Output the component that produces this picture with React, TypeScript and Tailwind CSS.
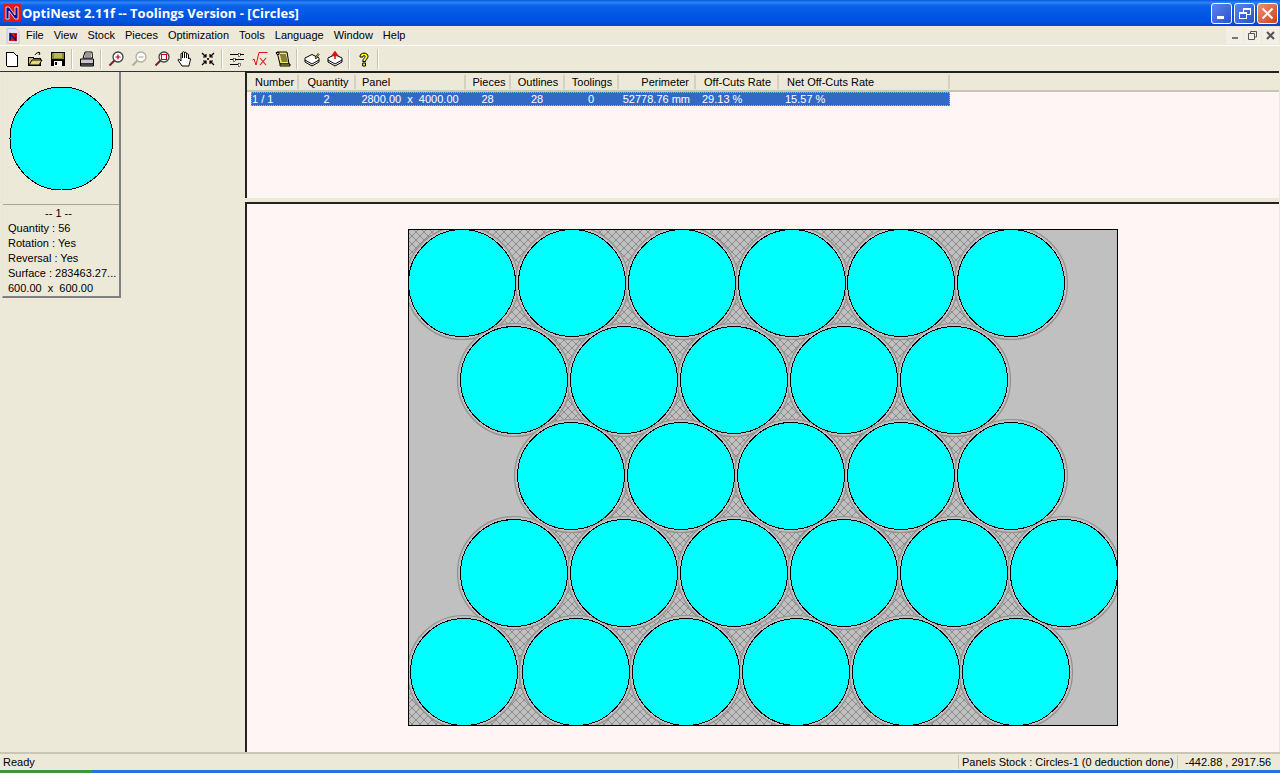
const rows = [
  { cy: 283, xs: [462, 572, 682, 792, 901, 1011] },
  { cy: 380, xs: [514, 624, 734, 844, 954] },
  { cy: 476, xs: [571, 681, 791, 901, 1011] },
  { cy: 573, xs: [514, 624, 734, 844, 954, 1064] },
  { cy: 672, xs: [464, 576, 686, 796, 906, 1016] },
]

const menus = ["File", "View", "Stock", "Pieces", "Optimization", "Tools", "Language", "Window", "Help"]

const columns = [
  { label: "Number", value: "1 / 1", w: "w-[48px]", head: "pl-[4px] text-left", cell: "-mr-[2px] text-left" },
  { label: "Quantity", value: "2", w: "w-[57px]", head: "pl-[3px] text-center", cell: "text-center" },
  { label: "Panel", value: "2800.00  x  4000.00", w: "w-[110px]", head: "pl-[6px] text-left", cell: "text-center" },
  { label: "Pieces", value: "28", w: "w-[45px]", head: "pl-[3px] text-center", cell: "text-center" },
  { label: "Outlines", value: "28", w: "w-[54px]", head: "pl-[2px] text-center", cell: "text-center" },
  { label: "Toolings", value: "0", w: "w-[54px]", head: "pl-[2px] text-center", cell: "text-center" },
  { label: "Perimeter", value: "52778.76 mm", w: "w-[77px]", head: "pr-[5px] text-right", cell: "pr-[5px] text-right" },
  { label: "Off-Cuts Rate", value: "29.13 %", w: "w-[83px]", head: "pl-[8px] text-left", cell: "pl-[7px] text-left" },
  { label: "Net Off-Cuts Rate", value: "15.57 %", w: "w-[171px]", head: "pl-[8px] text-left", cell: "pl-[7px] text-left" },
]

function Icon({ children }: { children: React.ReactNode }) {
  return (
    <svg width="16" height="16" viewBox="0 0 16 16" className="shrink-0" shapeRendering="crispEdges">
      {children}
    </svg>
  )
}

function ToolbarSep() {
  return <div className="mx-[2px] h-[20px] w-[2px] border-l border-r border-l-[#c5c2b2] border-r-white" />
}

function ToolButton({ children }: { children: React.ReactNode }) {
  return <div className="flex h-[22px] w-[23px] items-center justify-center">{children}</div>
}

function Magnifier({ stroke, handle, children }: { stroke: string; handle: string; children?: React.ReactNode }) {
  return (
    <Icon>
      <g shapeRendering="auto">
        <circle cx="10" cy="6" r="5" fill="#fff" stroke={stroke} strokeWidth="1.3" />
        <path d="M6.5 9.5L1.5 14.5" stroke={handle} strokeWidth="2" />
        {children}
      </g>
    </Icon>
  )
}

function Stack({ top }: { top: React.ReactNode }) {
  return (
    <Icon>
      <g shapeRendering="auto">
        <path d="M1 7L8 3.5L15 7L8 11Z" fill="#fff" stroke="#000" />
        <path d="M1 7V9L8 13L15 9V7M1 9V11L8 15L15 11V9" fill="#fff" stroke="#000" />
        {top}
      </g>
    </Icon>
  )
}

function Toolbar() {
  return (
    <div className="flex h-[25px] items-center bg-[#ece9d8]">
      <ToolButton>
        <Icon>
          <path d="M3 1H10V2H11V3H12V4H13V15H3Z" fill="#fff" />
          <path d="M3 1H10V2H3ZM2 1H3V15H2ZM3 15H14V16H3ZM13 4H14V15H13ZM10 2H11V3H10ZM11 3H12V4H11ZM12 4H13V5H12Z" fill="#000" />
        </Icon>
      </ToolButton>
      <ToolButton>
        <Icon>
          <path d="M1 6H6V7H13V14H1Z" fill="#d6c24a" stroke="#000" />
          <path d="M2 14L5 9H15L12 14Z" fill="#e8d872" stroke="#000" strokeWidth="1" shapeRendering="auto" />
          <path d="M8 4C9 2 11 1 13 2M13 2L11 1M13 2L12 4" fill="none" stroke="#000" shapeRendering="auto" />
        </Icon>
      </ToolButton>
      <ToolButton>
        <Icon>
          <path d="M1 1H15V15H1Z" fill="#000" />
          <path d="M2 2H14V8H2Z" fill="#8a8a20" />
          <path d="M4 2H12V7H4Z" fill="#b8b860" />
          <path d="M4 10H12V15H4Z" fill="#fff" />
          <path d="M5 11H7V14H5Z" fill="#000" />
        </Icon>
      </ToolButton>
      <ToolbarSep />
      <ToolButton>
        <Icon>
          <g shapeRendering="auto">
            <path d="M4 7L6 1H13L13.5 7Z" fill="#fff" stroke="#000" />
            <path d="M1.5 8H14.5V13H1.5Z" fill="#c8c8c8" stroke="#000" />
            <path d="M1.5 13H14.5V15H1.5Z" fill="#808080" stroke="#000" />
            <path d="M10 10H13V11H10Z" fill="#e8d040" />
            <path d="M6 3H12M5.5 5H12" stroke="#000" strokeWidth="0.8" />
          </g>
        </Icon>
      </ToolButton>
      <ToolbarSep />
      <ToolButton>
        <Magnifier stroke="#404040" handle="#7a2030">
          <path d="M7.5 6H12.5M10 3.5V8.5" stroke="#c00020" strokeWidth="1.2" />
        </Magnifier>
      </ToolButton>
      <ToolButton>
        <Magnifier stroke="#b0ae9e" handle="#b0ae9e">
          <path d="M7.5 6H12.5" stroke="#b0ae9e" strokeWidth="1.2" />
        </Magnifier>
      </ToolButton>
      <ToolButton>
        <Magnifier stroke="#404040" handle="#7a2030">
          <path d="M7.5 3.5H12.5V8.5H7.5Z" fill="none" stroke="#c00020" strokeWidth="1.1" />
        </Magnifier>
      </ToolButton>
      <ToolButton>
        <Icon>
          <path
            d="M5 15C4 13 2 11 1 9C1 8 2 8 3 9L4 10V3C4 2 5.500 2 5.500 3V7V1.500C5.500 0.500 7.500 0.500 7.500 1.500V7V2C7.500 1 9.500 1 9.500 2V7V3.500C9.500 2.500 11.500 2.500 11.500 3.500V8C12 7 13.500 7 13.500 8C13.500 10 12 13 12 15Z"
            fill="#fff"
            stroke="#000"
            strokeWidth="1"
            shapeRendering="auto"
          />
        </Icon>
      </ToolButton>
      <ToolButton>
        <Icon>
          <g shapeRendering="auto" stroke="#000" strokeWidth="1.2" fill="none">
            <path d="M2 2L6 6M6 3V6H3" />
            <path d="M14 2L10 6M10 3V6H13" />
            <path d="M2 14L6 10M6 13V10H3" />
            <path d="M14 14L10 10M10 13V10H13" />
          </g>
          <path d="M7 7H9V9H7Z" fill="#a00000" />
        </Icon>
      </ToolButton>
      <ToolbarSep />
      <ToolButton>
        <Icon>
          <path d="M1 3H15V4H1ZM1 8H15V9H1ZM1 13H9V14H1Z" fill="#000" />
          <path d="M9 2H11V5H9ZM4 7H6V10H4ZM9 12H11V15H9Z" fill="#fff" stroke="#000" strokeWidth="0.5" />
        </Icon>
      </ToolButton>
      <ToolButton>
        <svg width="16" height="16" viewBox="0 0 16 16" className="shrink-0">
          <path d="M0.500 9L2 8L4 14L7 1.500H15.500" fill="none" stroke="#e01010" strokeWidth="1" />
          <path d="M8 7L14 14M14 7L8 14" fill="none" stroke="#e01010" strokeWidth="1.1" />
        </svg>
      </ToolButton>
      <ToolButton>
        <Icon>
          <g shapeRendering="auto">
            <path d="M2 1H12L14 13H5Z" fill="#f0e870" stroke="#000" />
            <path d="M1 1.500H4V3.500H2ZM5 13V15H15V13Z" fill="#c8c040" stroke="#000" />
            <path d="M5 4H11M5.500 6H11.500M6 8H12M6.500 10H12.500" stroke="#000" strokeWidth="0.9" />
          </g>
        </Icon>
      </ToolButton>
      <ToolbarSep />
      <ToolButton>
        <Stack top={<path d="M11 7L14 2.500L15 3.500L12 8Z" fill="#e8d040" stroke="#000" strokeWidth="0.7" />} />
      </ToolButton>
      <ToolButton>
        <Stack top={<path d="M8 8V3.500M5.500 4.500L8 1L10.500 4.500Z" fill="#e01010" stroke="#e01010" strokeWidth="1.600" />} />
      </ToolButton>
      <ToolbarSep />
      <ToolButton>
        <Icon>
          <g shapeRendering="auto">
            <path
              d="M4 5.500C4 1 12 1 12 5.500C12 8 9.500 8 9.500 10.500H6.700C6.700 7.500 9 7.500 9 5.500C9 4 7 4 7 6H4Z"
              fill="#ffff20"
              stroke="#000"
            />
            <path d="M6.700 12H9.500V15H6.700Z" fill="#ffff20" stroke="#000" />
          </g>
        </Icon>
      </ToolButton>
      <ToolbarSep />
    </div>
  )
}

function PanelDrawing() {
  return (
    <svg width="1280" height="773" viewBox="0 0 1280 773" className="block">
      <defs>
        <pattern id="hatch" width="8" height="8" patternUnits="userSpaceOnUse">
          <rect width="8" height="8" fill="#c0c0c0" />
          <path d="M-1 1L1 -1M-1 9L9 -1M7 9L9 7M-1 -1L9 9" stroke="#8c8c8c" strokeWidth="1" fill="none" />
        </pattern>
        <clipPath id="sheet">
          <rect x="409" y="230" width="708" height="495" />
        </clipPath>
      </defs>
      <rect x="408.500" y="229.500" width="709" height="496" fill="#c0c0c0" stroke="#000" />
      <g clipPath="url(#sheet)">
        <path
          d="M408 230H1000L1011 283L954 380L1011 476L1064 573L1016 672V726H408V672L464 672L514 573L571 476L514 380L462 283L408 283Z"
          fill="url(#hatch)"
        />
        {rows.map((row) =>
          row.xs.map((cx) => (
            <circle key={`o${row.cy}-${cx}`} cx={cx} cy={row.cy} r="56.500" fill="#c0c0c0" stroke="#909090" strokeWidth="1.200" />
          )),
        )}
        {rows.map((row) =>
          row.xs.map((cx) => (
            <circle
              key={`c${row.cy}-${cx}`}
              cx={cx}
              cy={row.cy}
              r="53.500"
              fill="#00ffff"
              stroke="#000"
              strokeWidth="1"
              shapeRendering="crispEdges"
            />
          )),
        )}
      </g>
    </svg>
  )
}

export default function App() {
  return (
    <div className="flex h-[773px] w-[1280px] flex-col overflow-hidden bg-[#ece9d8] font-['Liberation_Sans',sans-serif] text-[11px] leading-none text-black">
      {/* Title bar */}
      <div className="flex h-[26px] shrink-0 items-center bg-[linear-gradient(180deg,#0a5be0_0%,#2a86f4_10%,#0a62ea_22%,#0055e5_60%,#0050dc_85%,#0046c0_100%)] pl-[3px] pr-[2px]">
        <svg width="18" height="18" viewBox="0 0 18 18" className="shrink-0">
          <rect width="18" height="18" fill="#e01818" />
          <path d="M3 15V3H6L12 11V3H15V15H12L6 7V15Z" fill="#0c0c90" stroke="#fff" strokeWidth="0.8" />
        </svg>
        <span className="ml-[1px] font-['Open_Sans',sans-serif] text-[13px] font-bold text-white">
          OptiNest 2.11f -- Toolings Version - [Circles]
        </span>
        <div className="ml-auto flex items-center gap-[2px]">
          <div className="relative h-[21px] w-[21px] rounded-[3px] border border-white bg-[linear-gradient(135deg,#5a86ee,#2a50d0)]">
            <div className="absolute bottom-[4px] left-[5px] h-[3px] w-[7px] bg-white" />
          </div>
          <div className="relative h-[21px] w-[21px] rounded-[3px] border border-white bg-[linear-gradient(135deg,#5a86ee,#2a50d0)]">
            <div className="absolute left-[8px] top-[4px] h-[7px] w-[8px] border border-t-2 border-white" />
            <div className="absolute left-[4px] top-[8px] h-[7px] w-[8px] border border-t-2 border-white bg-[#3c62dc]" />
          </div>
          <div className="flex h-[21px] w-[21px] items-center justify-center rounded-[3px] border border-white bg-[linear-gradient(135deg,#f09070,#d04018)]">
            <svg width="13" height="13" viewBox="0 0 13 13">
              <path d="M1.500 1.500L11.500 11.500M11.500 1.500L1.500 11.500" stroke="#fff" strokeWidth="2" />
            </svg>
          </div>
        </div>
      </div>

      {/* Menu bar */}
      <div className="flex h-[20px] shrink-0 items-center border-b border-white pl-[6px]">
        <svg width="14" height="16" viewBox="0 0 14 16" className="shrink-0">
          <path d="M1 0.500H10L13 3.500V15.500H1Z" fill="#dfe6fb" stroke="#b8c4ea" />
          <rect x="3" y="5" width="8" height="8" fill="#d81010" />
          <path d="M4.500 12V6L9.500 12V6" fill="none" stroke="#101080" strokeWidth="1.300" />
        </svg>
        <div className="ml-[6px] flex gap-[10px]">
          {menus.map((m) => (
            <span key={m}>{m}</span>
          ))}
        </div>
        <div className="ml-auto flex items-center gap-[1px] pr-[1px]">
          {["min", "restore", "close"].map((k) => (
            <div key={k} className="flex h-[17px] w-[17px] items-center justify-center bg-[#f1efe6]">
              {k === "min" && <div className="mt-[4px] h-[2px] w-[6px] bg-[#777]" />}
              {k === "restore" && (
                <svg width="9" height="9" viewBox="0 0 9 9">
                  <path d="M2.500 2V0.500H8.500V6H7M0.500 2.500H6.500V8.500H0.500Z" fill="none" stroke="#555" />
                </svg>
              )}
              {k === "close" && (
                <svg width="9" height="9" viewBox="0 0 9 9">
                  <path d="M1 1L8 8M8 1L1 8" stroke="#555" strokeWidth="2" />
                </svg>
              )}
            </div>
          ))}
        </div>
      </div>

      <Toolbar />

      {/* Workspace */}
      <div className="flex min-h-0 flex-1">
        {/* Pieces panel */}
        <div className="w-[245px] shrink-0 border-t border-t-[#333] pl-[2px]">
          <div className="flex h-[226px] w-[119px] flex-col border-b-2 border-r-2 border-[#808080] border-l-[1px] border-l-[#e8e6da]">
            <div className="flex h-[132px] items-start justify-center pt-[14px]">
              <svg width="105" height="105" viewBox="0 0 105 105" shapeRendering="crispEdges">
                <circle cx="52.500" cy="52.500" r="51.500" fill="#00ffff" stroke="#000" />
              </svg>
            </div>
            <div className="flex flex-col gap-[4px] border-t border-[#a8a698] pl-[5px] pt-[3px] leading-[11px]">
              <div className="pr-[10px] text-center">-- 1 --</div>
              <div>Quantity : 56</div>
              <div>Rotation : Yes</div>
              <div>Reversal : Yes</div>
              <div>Surface : 283463.27...</div>
              <div className="whitespace-pre">600.00  x  600.00</div>
            </div>
          </div>
        </div>

        {/* Right column */}
        <div className="mr-[1px] flex min-w-0 flex-1 flex-col">
          {/* Results list */}
          <div className="flex h-[127px] shrink-0 flex-col border-l-2 border-t-2 border-l-[#222] border-t-[#222] bg-[#fff5f5]">
            <div className="flex h-[19px] shrink-0 items-center border-b-2 border-b-[#c9c6b6] bg-[#ece9d8] pl-[4px]">
              {columns.map((c) => (
                <div key={c.label} className={`${c.w} ${c.head} h-[14px] shrink-0 whitespace-nowrap border-r-2 border-r-[#d4d1c0] leading-[14px]`}>
                  {c.label}
                </div>
              ))}
            </div>
            <div className="ml-[4px] flex h-[14px] w-[699px] items-center border border-dotted border-[#d8a860] bg-[#316ac5] text-white">
              {columns.map((c) => (
                <div key={c.label} className={`${c.w} ${c.cell} shrink-0 whitespace-pre`}>
                  {c.value}
                </div>
              ))}
            </div>
          </div>

          <div className="h-[4px] shrink-0" />

          {/* Nesting drawing */}
          <div className="relative min-h-0 flex-1 overflow-hidden border-l-2 border-t-2 border-l-[#222] border-t-[#222] bg-[#fff5f5]">
            <div className="absolute left-[-247px] top-[-204px]">
              <PanelDrawing />
            </div>
          </div>
        </div>
      </div>

      {/* Status bar */}
      <div className="flex h-[18px] shrink-0 items-center border-t-2 border-t-[#c9c6b6] pl-[3px]">
        <span>Ready</span>
        <div className="ml-auto flex h-[14px] items-center">
          <div className="flex h-full w-[219px] items-center whitespace-nowrap border-l border-[#c9c6b6] pl-[3px]">Panels Stock : Circles-1 (0 deduction done)</div>
          <div className="flex h-full w-[103px] items-center whitespace-nowrap border-l border-[#c9c6b6] pl-[7px]">-442.88 , 2917.56</div>
        </div>
      </div>
      <div className="flex h-[3px] shrink-0 bg-[#2a6fe0]">
        <div className="h-full w-[92px] bg-[#3a963a]" />
      </div>
    </div>
  )
}
